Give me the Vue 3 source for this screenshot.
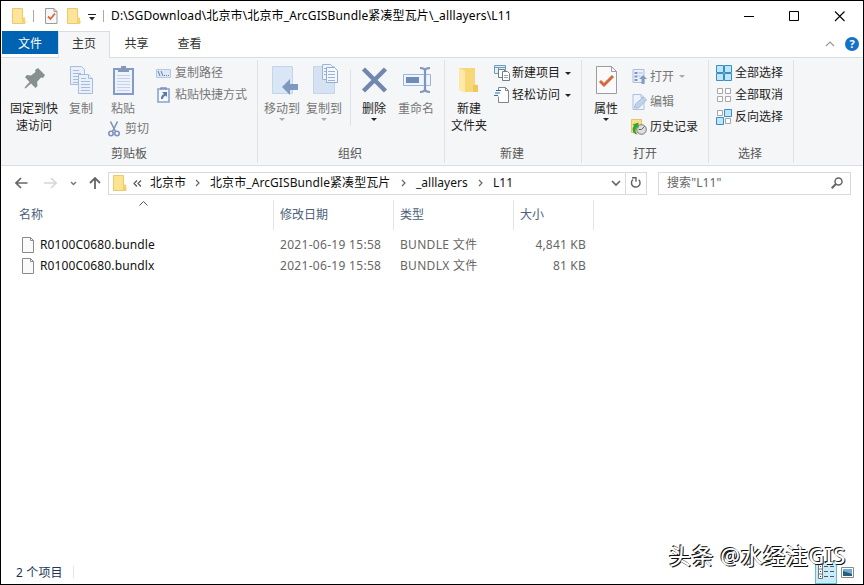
<script setup>
const files = [
  { name: 'R0100C0680.bundle', date: '2021-06-19 15:58', type: 'BUNDLE 文件', size: '4,841 KB' },
  { name: 'R0100C0680.bundlx', date: '2021-06-19 15:58', type: 'BUNDLX 文件', size: '81 KB' }
]
</script>

<template>
  <div class="window">
    <header class="titlebar">
      <svg class="qa-folder" width="14" height="16" viewBox="0 0 14 16"><path d="M.5.5h10v12h2.500v3H.5z" fill="#fce49a" stroke="#ecca6c" /><path d="M10.500 9.500h2.500v6h-3.500z" fill="#f6d36d" /></svg>
      <i class="tick"></i>
      <svg class="qa-check" width="13" height="16" viewBox="0 0 13 16"><path d="M.5.5h8.500l3 3v12H.5z" fill="#f7f7f7" stroke="#9b9b9b" /><path d="M9 .5v3h3" fill="none" stroke="#9b9b9b" /><path d="M3 8.500l2.500 2.500 4.500-5.500" fill="none" stroke="#d9673b" stroke-width="1.800" /></svg>
      <svg class="qa-folder2" width="14" height="16" viewBox="0 0 14 16"><path d="M.5.5h10v12h2.500v3H.5z" fill="#fce49a" stroke="#ecca6c" /><path d="M10.500 9.500h2.500v6h-3.500z" fill="#f6d36d" /></svg>
      <svg class="qa-more" width="8" height="7" viewBox="0 0 8 7"><path d="M0 .5h8" stroke="#222" /><path d="M1 3h6L4 6.500z" fill="#222" /></svg>
      <i class="tick"></i>
      <span class="path">D:\SGDownload\北京市\北京市_ArcGISBundle紧凑型瓦片\_alllayers\L11</span>
      <svg class="controls" width="101" height="11" viewBox="0 0 101 11" fill="none" stroke="#000"><path d="M0 5.500h10" /><path d="M45.500.5h9v9h-9z" /><path d="M91 .5l9.500 9.500M100.500.5L91 10" stroke-width="1.100" /></svg>
    </header>

    <nav class="tabs">
      <span class="tab file">文件</span>
      <span class="tab active">主页</span>
      <span class="tab share">共享</span>
      <span class="tab">查看</span>
      <svg class="collapse" width="10" height="6" viewBox="0 0 10 6"><path d="M1 5l4-4 4 4" fill="none" stroke="#999" stroke-width="1.200" /></svg>
      <span class="help">?</span>
    </nav>

    <section class="ribbon">
      <div class="group clipboard">
        <div class="tools">
          <div class="big pin">
            <svg width="32" height="34" viewBox="0 0 32 34"><path d="M17 7l3-2 7 7-2 3-2-.5-4 4.500.5 4-2 2-4.500-4.500-5 4.500-1.500.5.5-1.500 4.500-5L7 14l2-2 4 .5L17.500 9z" fill="#87908f" /></svg>
            <span>固定到快<br>速访问</span>
          </div>
          <div class="big copy dim">
            <svg width="32" height="34" viewBox="0 0 32 34" fill="#eaf0fa" stroke="#a7bcdc"><path d="M5.500 3.500h11l3 3v15h-14z" /><path d="M8 7.500h6M8 10.500h8M8 13.500h8M8 16.500h8M8 19.500h8" /><path d="M13.500 11.500h10l4 4v15h-14z" /><path d="M23.500 11.500v4h4M16 15.500h5M16 18.500h9M16 21.500h9M16 24.500h9M16 27.500h9" /></svg>
            <span>复制</span>
          </div>
          <div class="paste-stack dim">
            <div class="big paste">
              <svg width="32" height="34" viewBox="0 0 32 34"><path d="M7 6h19v25H7z" fill="#eef3fb" stroke="#829bc8" stroke-width="2" /><path d="M10 12.500h13M10 15.500h13M10 18.500h13M10 21.500h13M10 24.500h13M10 27.500h13" stroke="#c3d2e8" /><path d="M11 9V6h3V3h5v3h3v3z" fill="#8397b9" /></svg>
              <span>粘贴</span>
            </div>
            <div class="small cut">
              <svg width="12" height="16" viewBox="0 0 12 16" fill="none" stroke="#7f93b8" stroke-width="1.600"><path d="M2.500.5l5 10M9.500.5l-5 10" /><circle cx="3" cy="12.500" r="2.200" /><circle cx="9" cy="12.500" r="2.200" /></svg>
              <span>剪切</span>
            </div>
          </div>
          <div class="stack paths dim">
            <div class="small">
              <svg width="16" height="16" viewBox="0 0 16 16"><path d="M.5 4.500h14v8H.5z" fill="#dce7f7" stroke="#b4c7e5" /><path d="M2 6l2 5M5 6l2 5M8 10.500h1M10 10.500h1M12 10.500h1" stroke="#6680aa" /></svg>
              <span>复制路径</span>
            </div>
            <div class="small">
              <svg width="16" height="16" viewBox="0 0 16 16"><path d="M2 2h11v13H2z" fill="#f5f8fe" stroke="#8ba4cd" stroke-width="1.600" /><path d="M5 3V1h5v2" fill="none" stroke="#7790ba" stroke-width="1.300" /><path d="M5 12c0-3 1-4 3-5L6 5h5v5L9.500 8.500C8 9.500 7 10 7 12z" fill="#5979a9" /></svg>
              <span>粘贴快捷方式</span>
            </div>
          </div>
        </div>
        <div class="caption">剪贴板</div>
      </div>

      <div class="group organize">
        <div class="tools">
          <div class="big move dim">
            <svg width="32" height="34" viewBox="0 0 32 34"><path d="M6.500 3.500h20v27h-20z" fill="#d9e6f6" stroke="#c3d5ec" /><path d="M16 24l8-8v5h8v6h-8v5z" fill="#8098bf" /></svg>
            <span>移动到</span><i class="arrow"></i>
          </div>
          <div class="big copyto dim">
            <svg width="32" height="34" viewBox="0 0 32 34"><path d="M5.500 3.500h21v27h-21z" fill="#d5e2f4" stroke="#c4d4eb" /><path d="M14.500 1.500h8l3 3v12h-11z" fill="#edf4fc" stroke="#9db5d8" /><path d="M16 5.500h2M16 8.500h2M16 11.500h2" stroke="#9ab2d5" /><path d="M18.500 4.500h8l3 3v12h-11z" fill="#f4f8fe" stroke="#91acd4" /><path d="M20 8.500h7M20 11.500h7M20 14.500h7M20 17.500h7" stroke="#9ab2d5" /></svg>
            <span>复制到</span><i class="arrow"></i>
          </div>
          <i class="inner-line"></i>
          <div class="big delete">
            <svg width="32" height="34" viewBox="0 0 32 34"><path d="M5.500 6l22 22M27.500 6l-22 22" stroke="#7187b0" stroke-width="4.500" /></svg>
            <span>删除</span><i class="arrow"></i>
          </div>
          <div class="big rename dim">
            <svg width="32" height="34" viewBox="0 0 32 34"><path d="M3.500 11.500h27v11h-27z" fill="#edf4fc" stroke="#9db4d7" /><path d="M6 14h13v6H6z" fill="#718bb8" /><path d="M20 5c3 0 5 1 5 3v18c0 2-2 3-5 3M30 5c-3 0-5 1-5 3M30 29c-3 0-5-1-5-3" fill="none" stroke="#7e95bd" stroke-width="2.200" /></svg>
            <span>重命名</span>
          </div>
        </div>
        <div class="caption">组织</div>
      </div>

      <div class="group create">
        <div class="tools">
          <div class="big folder">
            <svg width="32" height="34" viewBox="0 0 32 34"><path d="M6 5h16v16l3 2v6H11z" fill="#f8d778" /><path d="M6 5l6 3v22l-6-3z" fill="#ffe9a8" /><path d="M20 22h5v7h-5z" fill="#efc65f" /></svg>
            <span>新建<br>文件夹</span>
          </div>
          <div class="stack new-items">
            <div class="small">
              <svg width="16" height="16" viewBox="0 0 16 16" fill="#fff" stroke="#717e88"><path d="M.5.5h11v8H.5z" fill="#ddeff8" stroke="#6d9eb5" /><path d="M.5 2.500h11M4.500 2.500v6" stroke="#6d9eb5" /><path d="M4.500 4.500h6v8h-6z" /><path d="M8.500 6.500h5l2 2v7h-7z" /><path d="M10 10.500h4M10 12.500h4" stroke="#91a8b7" /></svg>
              <span>新建项目</span><i class="side-arrow"></i>
            </div>
            <div class="small">
              <svg width="16" height="16" viewBox="0 0 16 16"><path d="M4.500 3.500v-3h7l3 3v12h-10v-6" fill="#fff" stroke="#7f878e" /><path d="M11.500.5v3h3" fill="none" stroke="#7f878e" /><path d="M2 3.500h5M1 6h5M0 8.500h4" stroke="#376e9e" stroke-width="1.200" /></svg>
              <span>轻松访问</span><i class="side-arrow"></i>
            </div>
          </div>
        </div>
        <div class="caption">新建</div>
      </div>

      <div class="group open">
        <div class="tools">
          <div class="big properties">
            <svg width="32" height="34" viewBox="0 0 32 34"><path d="M6.500 3.500h15l5 5v22h-20z" fill="#fafafa" stroke="#9d9d9d" /><path d="M21.500 3.500v5h5" fill="none" stroke="#9d9d9d" /><path d="M10 18l4 4 9-9" fill="none" stroke="#d86739" stroke-width="3" /></svg>
            <span>属性</span><i class="arrow"></i>
          </div>
          <div class="stack open-items">
            <div class="small dim">
              <svg width="16" height="16" viewBox="0 0 16 16"><path d="M1.500.5h11v13h-11z" fill="#eaf1fb" stroke="#acbfdd" /><path d="M3 3h3v2H3zM3 6.500h3v2H3zM3 10h3v2H3z" fill="#7e97bf" /><path d="M7 4h4M7 7h2" stroke="#a2b7d6" /><path d="M7.500 10l4-4 4 4h-2.500v5h-3v-5z" fill="#849cc4" /></svg>
              <span>打开</span><i class="side-arrow"></i>
            </div>
            <div class="small dim">
              <svg width="16" height="16" viewBox="0 0 16 16"><path d="M1.500.5h8l3 3v12h-11z" fill="#edf3fb" stroke="#aec1de" /><path d="M9.500.5v3h3" fill="none" stroke="#aec1de" /><path d="M3 14l1-4 8-7 3 3-8 8z" fill="#c0d2eb" stroke="#a5badb" /></svg>
              <span>编辑</span>
            </div>
            <div class="small">
              <svg class="history" width="18" height="16" viewBox="0 0 18 16"><path d="M1.500.5h10v13h-10z" fill="#fbe08a" stroke="#e3c465" /><circle cx="11.500" cy="10.500" r="4.800" fill="#ddd" stroke="#777" /><path d="M11.500 10.500l3-3M11.500 10.500h-3" stroke="#666" /><path d="M8 15.500c-5 0-7-5-4-9L2.500 5.500l6-2v6L7 8c-2 3-2 6 1 7.500z" fill="#35a43d" /></svg>
              <span>历史记录</span>
            </div>
          </div>
        </div>
        <div class="caption">打开</div>
      </div>

      <div class="group select">
        <div class="stack choices">
          <div class="small">
            <svg width="16" height="16" viewBox="0 0 16 16" fill="#bfe6fb" stroke="#398fc5"><path d="M.5.5h7v7h-7zM8.500.5h7v7h-7zM.5 8.500h7v7h-7zM8.500 8.500h7v7h-7z" /></svg>
            <span>全部选择</span>
          </div>
          <div class="small">
            <svg width="16" height="16" viewBox="0 0 16 16" fill="#fff" stroke="#a6a6a6"><path d="M1.500 1.500h5v5h-5zM9.500 1.500h5v5h-5zM1.500 9.500h5v5h-5zM9.500 9.500h5v5h-5z" /></svg>
            <span>全部取消</span>
          </div>
          <div class="small">
            <svg width="16" height="16" viewBox="0 0 16 16"><path d="M1.500 1.500h5v5h-5zM9.500 9.500h5v5h-5z" fill="#fff" stroke="#a6a6a6" /><path d="M8.500.5h7v7h-7zM.5 8.500h7v7h-7z" fill="#bfe6fb" stroke="#398fc5" /></svg>
            <span>反向选择</span>
          </div>
        </div>
        <div class="caption">选择</div>
      </div>
    </section>

    <div class="navigation">
      <svg class="back" width="13" height="12" viewBox="0 0 13 12"><path d="M6 1L1 6l5 5M1 6h11.500" fill="none" stroke="#666" stroke-width="1.700" /></svg>
      <svg class="forward" width="13" height="12" viewBox="0 0 13 12"><path d="M7 1l5 5-5 5M12 6H0" fill="none" stroke="#d5d5d5" stroke-width="1.600" /></svg>
      <svg class="recent" width="7" height="5" viewBox="0 0 7 5"><path d="M1 1l2.500 2.500L6 1" fill="none" stroke="#777" stroke-width="1.400" /></svg>
      <svg class="up" width="12" height="12" viewBox="0 0 12 12"><path d="M1 6l5-5 5 5M6 1v11" fill="none" stroke="#666" stroke-width="1.800" /></svg>
      <div class="address">
        <svg class="address-folder" width="14" height="16" viewBox="0 0 14 16"><path d="M.5.5h10v12h2.500v3H.5z" fill="#fde390" stroke="#ecca6c" /><path d="M10.500 9.500h2.500v6h-3.500z" fill="#f5d06a" /></svg>
        <svg class="double" width="9" height="7" viewBox="0 0 9 7"><path d="M4 .5l-3 3 3 3M8 .5l-3 3 3 3" fill="none" stroke="#555" stroke-width="1.200" /></svg>
        <span class="crumb city">北京市</span>
        <svg class="chevron" width="5" height="8" viewBox="0 0 5 8"><path d="M1 1l3 3-3 3" fill="none" stroke="#666" stroke-width="1.200" /></svg>
        <span class="crumb bundle">北京市_ArcGISBundle紧凑型瓦片</span>
        <svg class="chevron" width="5" height="8" viewBox="0 0 5 8"><path d="M1 1l3 3-3 3" fill="none" stroke="#666" stroke-width="1.200" /></svg>
        <span class="crumb layers">_alllayers</span>
        <svg class="chevron" width="5" height="8" viewBox="0 0 5 8"><path d="M1 1l3 3-3 3" fill="none" stroke="#666" stroke-width="1.200" /></svg>
        <span class="crumb">L11</span>
        <svg class="dropdown" width="10" height="7" viewBox="0 0 10 7"><path d="M1 1l4 4 4-4" fill="none" stroke="#666" stroke-width="1.700" /></svg>
        <span class="refresh"><svg width="12" height="12" viewBox="0 0 12 12"><path d="M3 2.500a4.300 4.300 0 1 0 5.800.3" fill="none" stroke="#666" stroke-width="1.500" /><path d="M2 .8h4v4" fill="none" stroke="#666" stroke-width="1.400" /></svg></span>
      </div>
      <div class="search"><span>搜索"L11"</span><svg width="12" height="12" viewBox="0 0 12 12" fill="none" stroke="#666"><circle cx="7.500" cy="4.500" r="3.500" stroke-width="1.500" /><path d="M5 7L.7 11.300" stroke-width="2" /></svg></div>
    </div>

    <div class="columns">
      <span class="name">名称<svg width="9" height="5" viewBox="0 0 9 5"><path d="M.5 4.500l4-4 4 4" fill="none" stroke="#555" /></svg></span>
      <span class="date">修改日期</span><span class="type">类型</span><span class="size">大小</span>
    </div>
    <main class="files">
      <div v-for="file in files" :key="file.name" class="row">
        <svg width="12" height="16" viewBox="0 0 12 16"><path d="M.5.5h8l3 3v12H.5z" fill="#fafafa" stroke="#8a8a8a" /><path d="M8.500.5v3h3" fill="none" stroke="#8a8a8a" /></svg>
        <span class="filename">{{ file.name }}</span><span class="filedate">{{ file.date }}</span><span class="filetype">{{ file.type }}</span><span class="filesize">{{ file.size }}</span>
      </div>
    </main>
    <footer class="status">
      <span class="count">2 个项目</span><i></i>
      <span class="view-details"><svg width="18" height="16" viewBox="0 0 18 16"><path d="M1.500.5h4v14h-4zM1.500 5h4M1.500 10h4" fill="#fff" stroke="#777" /><path d="M3 2.500h1M3 7.500h1M3 12.500h1" stroke="#347" /><path d="M7 2.500h4M13 2.500h4M7 7.500h4M13 7.500h4M7 12.500h4M13 12.500h4" stroke="#556" /></svg></span>
      <svg class="view-picture" width="13" height="11" viewBox="0 0 13 11"><path d="M.5.5h12v10H.5z" fill="#fff" stroke="#8a8a8a" /><path d="M2 2h9v7H2z" fill="#6faedb" /><path d="M2 4l3 1 6 2v2H2z" fill="#285e78" /></svg>
    </footer>
    <div class="watermark">头条 @水经注GIS</div>
  </div>
</template>

<style>
body { margin: 0; overflow: hidden; }
</style>
<style scoped>
* { box-sizing: border-box; }
.window { width: 864px; height: 585px; border: 1px solid #000; background: #fff; display: flex; flex-direction: column; font: 12px/16px "Noto Sans", "Noto Sans CJK SC", sans-serif; color: #222; position: relative; overflow: hidden; }
svg { display: block; flex: none; }
span { white-space: nowrap; }
.titlebar { height: 30px; display: flex; align-items: center; padding-left: 11px; flex: none; color: #000; }
.titlebar .tick { width: 1px; height: 12px; background: #aaa; }
.qa-folder { margin-right: 7px; }
.qa-check { margin-left: 11px; margin-right: 9px; }
.qa-folder2 { margin-right: 7px; }
.qa-more { margin-right: 7px; margin-top: 3px; }
.path { margin-left: 7px; letter-spacing: .14px; }
.controls { margin-left: auto; margin-right: 18px; }
.tabs { height: 27px; flex: none; display: flex; align-items: flex-start; border-bottom: 1px solid #d9dce0; padding-left: 1px; }
.tab { height: 26px; width: 53px; text-align: center; line-height: 25px; color: #333; }
.tab.file { height: 23px; width: 56px; color: #fff; background: #0063b1; }
.tab.active { height: 27px; width: 52px; border: 1px solid #d9dce0; border-bottom: 0; background: #f5f6f7; line-height: 24px; }
.collapse { margin: 10px 10px 0 auto; }
.help { width: 14px; height: 14px; margin: 6px 4px 0 0; border-radius: 50%; background: #1473c7; color: #fff; text-align: center; font-size: 11px; line-height: 14px; font-weight: 700; }
.ribbon { height: 108px; flex: none; display: flex; background: #f5f6f7; border-bottom: 1px solid #d9dce0; }
.group { height: 103px; margin-top: 2px; border-right: 1px solid #dfe1e4; display: flex; flex-direction: column; }
.tools { display: flex; flex: 1; }
.caption { height: 18px; line-height: 17px; text-align: center; color: #555; margin-top: auto; }
.clipboard { width: 257px; }
.organize { width: 187px; }
.organize .caption, .create .caption, .select .caption { padding-right: 2px; }
.create { width: 137px; }
.open { width: 127px; }
.select { width: 85px; }
.big { display: flex; flex-direction: column; align-items: center; padding-top: 3px; flex: none; text-align: center; line-height: 17px; height: 77px; }
.big > span { margin-top: 3px; }
.dim { color: #777; }
.arrow { border: 3px solid transparent; border-top-color: #222; border-bottom: 0; margin-top: 1px; }
.dim .arrow, .dim .side-arrow { border-top-color: #aaa; }
.small { display: flex; align-items: center; height: 22px; }
.small > span { margin-left: 3px; }
.side-arrow { border: 3px solid transparent; border-top-color: #222; border-bottom: 0; margin-left: 5px; }
.pin { width: 50px; margin-left: 8px; }
.copy { width: 32px; margin-left: 6px; }
.paste-stack { margin-left: 6px; width: 48px; }
.paste { width: 32px; margin-left: 4px; height: 59px; }
.cut { height: 20px; margin-left: 5px; }
.cut > span { margin-left: 5px; }
.paths { margin-top: 2px; margin-left: 5px; }
.move { width: 42px; margin-left: 3px; }
.copyto { width: 42px; }
.inner-line { height: 56px; width: 1px; background: #dfe1e4; margin: 10px 5px 0 5px; }
.delete { width: 36px; }
.rename { width: 42px; margin-left: 3px; }
.folder { width: 42px; margin-left: 3px; }
.new-items { margin: 2px 0 0 4px; }
.new-items .small > span { margin-left: 2px; }
.properties { width: 36px; margin-left: 6px; }
.open-items { margin: 4px 0 0 7px; }
.open-items .small { height: 25px; }
.open-items .small > svg { width: 17px; }
.open-items .small > svg.history { width: 18px; margin-left: -1px; }
.open-items .small > span { margin-left: 2px; }
.choices { margin: 2px 0 0 7px; }
.navigation { display: flex; align-items: center; height: 34px; flex: none; padding-left: 14px; }
.forward { margin-left: 16px; }
.recent { margin-left: 13px; }
.up { margin-left: 12px; }
.address { width: 539px; height: 23px; margin-left: 7px; border: 1px solid #d9d9d9; display: flex; align-items: center; flex: none; color: #111; }
.address-folder { margin: 0 6px 0 4px; }
.double { margin-right: 8px; }
.chevron { margin: 0 10px 0 9px; }
.bundle { width: 182px; letter-spacing: .08px; }
.layers { width: 53px; }
.dropdown { margin-left: auto; margin-right: 4px; }
.refresh { height: 21px; width: 21px; border-left: 1px solid #d9d9d9; display: flex; align-items: center; justify-content: center; }
.search { width: 193px; height: 23px; border: 1px solid #d9d9d9; margin-left: 11px; padding: 0 7px 0 8px; display: flex; align-items: center; justify-content: space-between; color: #666; letter-spacing: .1px; }
.columns { height: 30px; flex: none; display: flex; color: #4c607a; line-height: 30px; }
.columns > span { border-right: 1px solid #e4e4e4; padding-left: 6px; }
.columns .name { width: 273px; padding-left: 18px; display: flex; }
.name svg { margin: 1px 0 0 96px; }
.columns .date, .columns .type { width: 120px; }
.columns .size { width: 80px; }
.files { flex: 1; padding-top: 4px; }
.row { height: 21px; display: flex; align-items: center; padding-left: 21px; color: #666; }
.filename { width: 240px; padding-left: 6px; color: #111; letter-spacing: .14px; }
.filedate { width: 120px; padding-left: 6px; letter-spacing: .3px; }
.filetype { width: 114px; padding-left: 6px; letter-spacing: .3px; }
.filesize { width: 78px; text-align: right; letter-spacing: .2px; }
.status { height: 24px; flex: none; display: flex; align-items: center; padding-left: 15px; color: #1c365a; }
.count { padding-top: 1px; letter-spacing: .15px; }
.status > i { width: 1px; height: 12px; background: #e5e5e5; margin-left: 10px; }
.view-details { margin-left: auto; width: 22px; height: 23px; background: #c9edf8; border: 1px solid #63bdd5; display: flex; align-items: center; justify-content: center; }
.view-picture { margin: 0 9px 0 4px; }
.watermark { position: absolute; left: 668px; top: 540px; font-size: 22px; font-weight: 500; line-height: 28px; letter-spacing: .55px; color: #fff; text-shadow: -1px -1px 0 #111, 1px 1px 0 #111; white-space: nowrap; }
</style>
